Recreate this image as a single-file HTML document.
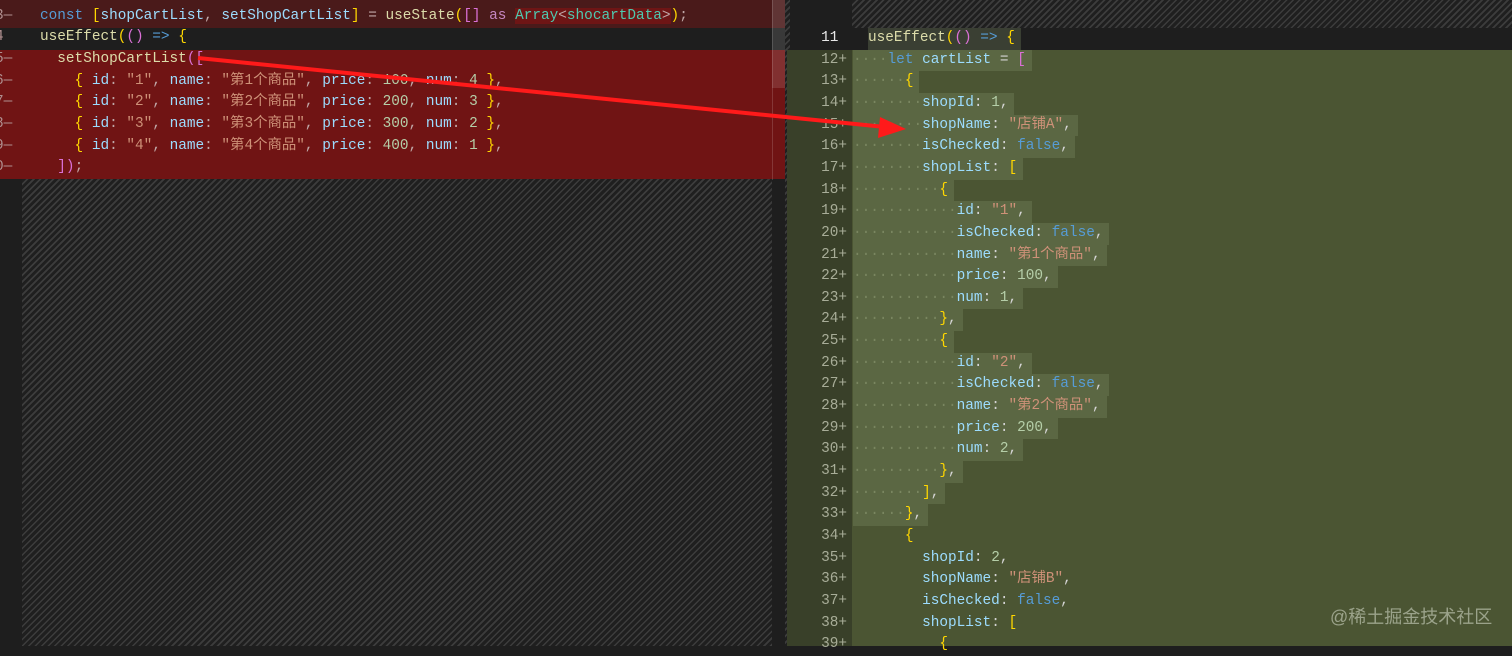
<!DOCTYPE html>
<html><head><meta charset="utf-8"><style>
*{margin:0;padding:0;box-sizing:border-box}
body{width:1512px;height:646px;overflow:hidden;background:#1e1e1e;position:relative;font-family:"Liberation Mono","Noto Sans CJK SC",monospace;font-size:14.4px;color:#d4d4d4}
.hatch{position:absolute;background:repeating-linear-gradient(135deg,#1f1f1f 0 3px,#3c3c3c 3px 4.6px)}
.row{position:absolute;height:21.65px;line-height:21.65px;white-space:pre}
.k{color:#569cd6}.v{color:#9cdcfe}.s{color:#ce9178}.n{color:#b5cea8}.f{color:#dcdcaa}.t{color:#4ec9b0}.p{color:#c586c0}.y{color:#ffd700}.m{color:#da70d6}
.ln{position:absolute;width:60px;text-align:right;color:#a8ad98;height:21.65px;line-height:21.65px}
.lln{position:absolute;left:-5px;color:#b09090;height:21.65px;line-height:21.65px}
.sel{background:#5b6743;display:inline-block;padding-right:6px}
.dot{color:#7a8660}
</style></head><body>
<!-- left pane -->
<div class="hatch" style="left:22px;top:179px;width:750px;height:467px"></div>
<div style="position:absolute;left:0;top:0;width:785px;height:28px;background:#4a1a1a"></div>
<div style="position:absolute;left:0;top:28px;width:785px;height:22px;background:#1e1e1e"></div>
<div style="position:absolute;left:0;top:50px;width:785px;height:129px;background:#701414"></div>
<div style="position:absolute;left:772px;top:0;width:13px;height:88px;background:rgba(255,255,255,.12)"></div>
<div style="position:absolute;left:772px;top:0;width:1px;height:180px;background:rgba(255,255,255,.15)"></div>
<div class="row" style="left:40px;top:-16px"><span class="y">}</span></div>
<div class="lln" style="top:5.6px">3—</div><div class="lln" style="top:27.3px">4</div><div class="lln" style="top:49px">5—</div><div class="lln" style="top:70.6px">6—</div><div class="lln" style="top:92.3px">7—</div><div class="lln" style="top:114px">8—</div><div class="lln" style="top:135.6px">9—</div><div class="lln" style="top:157.3px">0—</div>
<div class="row" style="left:40px;top:5.6px;color:#c0a8a8"><span class="k">const</span> <span class="y">[</span><span class="v">shopCartList</span>, <span class="v">setShopCartList</span><span class="y">]</span> = <span class="f">useState</span><span class="y">(</span><span class="m">[]</span> <span class="p">as</span> <span style="background:#6e1515"><span class="t">Array</span>&lt;<span class="t">shocartData</span>&gt;</span><span class="y">)</span>;</div>
<div class="row" style="left:40px;top:27.3px;color:#c0c0c0"><span class="f">useEffect</span><span class="y">(</span><span class="m">()</span> <span class="k">=&gt;</span> <span class="y">{</span></div>
<div class="row" style="left:40px;top:49px;color:#c0a8a8">  <span class="f">setShopCartList</span><span class="m">([</span></div>
<div class="row" style="left:40px;top:70.6px;color:#c0a8a8">    <span class="y">{</span> <span class="v">id</span>: <span class="s">"1"</span>, <span class="v">name</span>: <span class="s">"第1个商品"</span>, <span class="v">price</span>: <span class="n">100</span>, <span class="v">num</span>: <span class="n">4</span> <span class="y">}</span>,</div>
<div class="row" style="left:40px;top:92.3px;color:#c0a8a8">    <span class="y">{</span> <span class="v">id</span>: <span class="s">"2"</span>, <span class="v">name</span>: <span class="s">"第2个商品"</span>, <span class="v">price</span>: <span class="n">200</span>, <span class="v">num</span>: <span class="n">3</span> <span class="y">}</span>,</div>
<div class="row" style="left:40px;top:114px;color:#c0a8a8">    <span class="y">{</span> <span class="v">id</span>: <span class="s">"3"</span>, <span class="v">name</span>: <span class="s">"第3个商品"</span>, <span class="v">price</span>: <span class="n">300</span>, <span class="v">num</span>: <span class="n">2</span> <span class="y">}</span>,</div>
<div class="row" style="left:40px;top:135.6px;color:#c0a8a8">    <span class="y">{</span> <span class="v">id</span>: <span class="s">"4"</span>, <span class="v">name</span>: <span class="s">"第4个商品"</span>, <span class="v">price</span>: <span class="n">400</span>, <span class="v">num</span>: <span class="n">1</span> <span class="y">}</span>,</div>
<div class="row" style="left:40px;top:157.3px;color:#c0a8a8">  <span class="m">])</span>;</div>
<!-- right pane -->
<div class="hatch" style="left:785px;top:0;width:5px;height:646px"></div>
<div style="position:absolute;left:790px;top:0;width:722px;height:50px;background:#1e1e1e"></div>
<div class="hatch" style="left:852px;top:0;width:660px;height:28px"></div>
<div style="position:absolute;left:787px;top:50px;width:65px;height:596px;background:#394029"></div>
<div style="position:absolute;left:852px;top:50px;width:660px;height:596px;background:#4b5533"></div>
<div id="r"></div>
<div style="position:absolute;left:1330px;top:603px;font-family:'Liberation Sans','Noto Sans CJK SC',sans-serif;font-size:18px;color:rgba(220,225,210,.55)">@稀土掘金技术社区</div>
<svg style="position:absolute;left:0;top:0" width="1512" height="646"><line x1="198" y1="58" x2="885" y2="127" stroke="#ff1a1a" stroke-width="4"/><polygon points="906,129 880,117 878,138" fill="#ff1a1a"/></svg>
<script>
const L=[
[11,2,'<span class="f">useEffect</span><span class="y">(</span><span class="m">()</span> <span class="k">=&gt;</span> <span class="y">{</span>',1],
[12,4,'<span class="k">let</span> <span class="v">cartList</span> = <span class="m">[</span>',1],
[13,6,'<span class="y">{</span>',1],
[14,8,'<span class="v">shopId</span>: <span class="n">1</span>,',1],
[15,8,'<span class="v">shopName</span>: <span class="s">"店铺A"</span>,',1],
[16,8,'<span class="v">isChecked</span>: <span class="k">false</span>,',1],
[17,8,'<span class="v">shopList</span>: <span class="y">[</span>',1],
[18,10,'<span class="y">{</span>',1],
[19,12,'<span class="v">id</span>: <span class="s">"1"</span>,',1],
[20,12,'<span class="v">isChecked</span>: <span class="k">false</span>,',1],
[21,12,'<span class="v">name</span>: <span class="s">"第1个商品"</span>,',1],
[22,12,'<span class="v">price</span>: <span class="n">100</span>,',1],
[23,12,'<span class="v">num</span>: <span class="n">1</span>,',1],
[24,10,'<span class="y">}</span>,',1],
[25,10,'<span class="y">{</span>',1],
[26,12,'<span class="v">id</span>: <span class="s">"2"</span>,',1],
[27,12,'<span class="v">isChecked</span>: <span class="k">false</span>,',1],
[28,12,'<span class="v">name</span>: <span class="s">"第2个商品"</span>,',1],
[29,12,'<span class="v">price</span>: <span class="n">200</span>,',1],
[30,12,'<span class="v">num</span>: <span class="n">2</span>,',1],
[31,10,'<span class="y">}</span>,',1],
[32,8,'<span class="y">]</span>,',1],
[33,6,'<span class="y">}</span>,',1],
[34,6,'<span class="y">{</span>',0],
[35,8,'<span class="v">shopId</span>: <span class="n">2</span>,',0],
[36,8,'<span class="v">shopName</span>: <span class="s">"店铺B"</span>,',0],
[37,8,'<span class="v">isChecked</span>: <span class="k">false</span>,',0],
[38,8,'<span class="v">shopList</span>: <span class="y">[</span>',0],
[39,10,'<span class="y">{</span>',0]];
let h='';
L.forEach((l,i)=>{const top=28+i*21.65;
h+=`<div class="ln" style="left:787px;top:${top}px;${l[0]==11?'color:#e8e8e8;':''}">${l[0]}${l[0]==11?'&nbsp;':'+'}</div>`;
let ind;
if(l[3]&&l[0]!=11){ind='<span class="dot">'+'·'.repeat(l[1])+'</span>';}else ind=' '.repeat(l[1]);
let inner=l[3]?`<span class="sel"${l[0]==11?' style="background:#3a3f33"':''}>${l[0]==11?'':ind}${l[2]}</span>`:ind+l[2];
h+=`<div class="row" style="left:${l[0]==11?868:853}px;top:${top}px">${inner}</div>`;});
document.getElementById('r').innerHTML=h;
</script>
</body></html>
